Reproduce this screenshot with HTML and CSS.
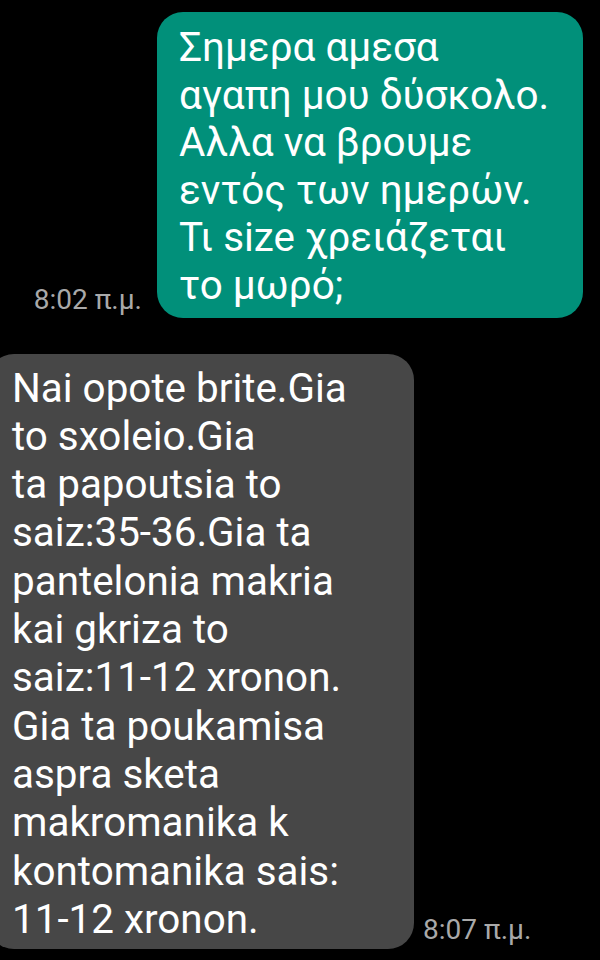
FILE: index.html
```html
<!DOCTYPE html>
<html>
<head>
    <link rel="stylesheet" href="styles.css">
</head>
<body>
    <div class="thread">
        <div class="row sent">
            <span class="time">8:02 π.μ.</span>
            <div class="bubble green">Σημερα αμεσα
αγαπη μου δύσκολο.
Αλλα να βρουμε
εντός των ημερών.
Τι size χρειάζεται
το μωρό;</div>
        </div>

        <div class="row received">
            <div class="bubble gray">Nai opote brite.Gia
to sxoleio.Gia
ta papoutsia to
saiz:35-36.Gia ta
pantelonia makria
kai gkriza to
saiz:11-12 xronon.
Gia ta poukamisa
aspra sketa
makromanika k
kontomanika sais:
11-12 xronon.</div>
            <span class="time">8:07 π.μ.</span>
        </div>
    </div>
</body>
</html>
```

FILE: styles.css
```css
body {
    margin: 0;
    padding: 0;
    background-color: #000;
    font-family: Roboto, "Noto Sans", sans-serif;
    overflow: hidden;
}
.thread {
    display: flex;
    flex-direction: column;
    gap: 36px;
    padding-top: 12px;
}
.row {
    display: flex;
    align-items: flex-end;
}
.sent {
    justify-content: flex-end;
    padding-right: 17px;
}
.received {
    margin-left: -12px;
}
.bubble {
    color: #fff;
    font-size: 40.4px;
    line-height: 47.6px;
    white-space: pre-line;
    border-radius: 26px;
}
.green {
    background-color: #01907a;
    width: 426px;
    box-sizing: border-box;
    padding: 12px 10px 8px 22px;
}
.gray {
    background-color: #474747;
    width: 426px;
    box-sizing: border-box;
    padding: 11px 10px 5px 24px;
    line-height: 48.3px;
}
.time {
    color: #a9a9a9;
    font-size: 28px;
    line-height: 28px;
    white-space: nowrap;
}
.sent .time {
    margin-right: 15px;
    margin-bottom: 4px;
}
.received .time {
    margin-left: 9px;
    margin-bottom: 5px;
}
```
